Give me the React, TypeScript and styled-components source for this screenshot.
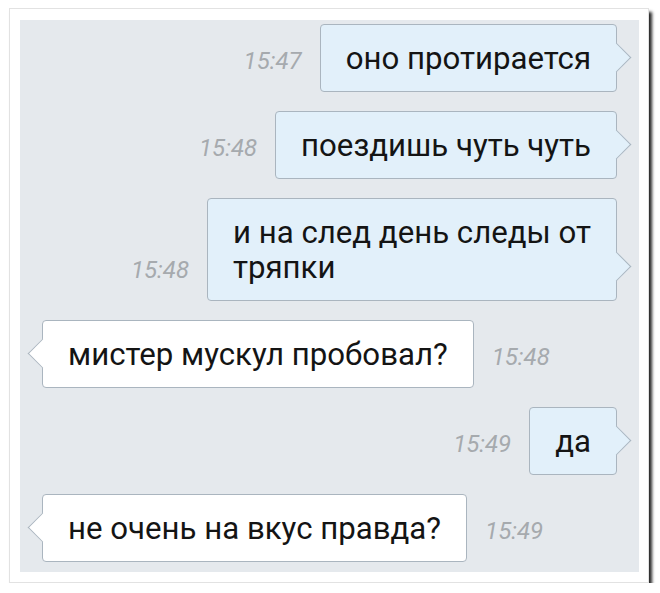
import { Fragment } from 'react';
import styled, { createGlobalStyle } from 'styled-components';

const GlobalStyle = createGlobalStyle`
    body {
        margin: 0;
        background: #ffffff;
        font-family: Roboto, 'Liberation Sans', sans-serif;
    }
`;

interface IMessage {
    lines: string[];
    time: string;
    out: boolean;
}

// lines are broken where the phone wrapped them
const MESSAGES: IMessage[] = [
    { lines: ['оно протирается'], time: '15:47', out: true },
    { lines: ['поездишь чуть чуть'], time: '15:48', out: true },
    { lines: ['и на след день следы от', 'тряпки'], time: '15:48', out: true },
    { lines: ['мистер мускул пробовал?'], time: '15:48', out: false },
    { lines: ['да'], time: '15:49', out: true },
    { lines: ['не очень на вкус правда?'], time: '15:49', out: false },
];

const Frame = styled.div`
    box-sizing: border-box;
    width: 640px;
    height: 575px;
    margin: 8px 0 0 9px;
    padding: 11px 9px 10px 10px;
    background: #ffffff;
    border: 1px solid #e2e2e2;
    box-shadow: 3px 4px 3px rgba(0, 0, 0, 0.85);
`;

const ChatArea = styled.div`
    box-sizing: border-box;
    height: 100%;
    padding: 4px 22px 0;
    background: #e5e9ed;
    display: flex;
    flex-direction: column;
    gap: 19px;
`;

const Row = styled.div<{ $out: boolean }>`
    display: flex;
    flex-direction: ${({ $out }) => ($out ? 'row' : 'row-reverse')};
    align-self: ${({ $out }) => ($out ? 'flex-end' : 'flex-start')};
    align-items: last baseline;
    gap: 18px;
`;

const Time = styled.span`
    font-size: 24px;
    font-style: italic;
    font-weight: 400;
    color: #a6aaae;
    white-space: nowrap;
`;

const Bubble = styled.div<{ $out: boolean }>`
    position: relative;
    padding: 16px 25px 15px 25px;
    font-size: 31.2px;
    line-height: 35px;
    white-space: nowrap;
    color: #141414;
    background: ${({ $out }) => ($out ? '#e2f0fa' : '#ffffff')};
    border: 1px solid #aab5bf;
    border-radius: 4px;

    &::after {
        content: '';
        position: absolute;
        bottom: 23px;
        width: 20px;
        height: 20px;
        background: inherit;
        transform: rotate(45deg);
        border: 1px solid #aab5bf;
        ${({ $out }) =>
            $out
                ? `right: -11px; border-left: none; border-bottom: none;`
                : `left: -11px; border-right: none; border-top: none;`}
    }
`;

export default function App() {
    return (
        <>
            <GlobalStyle />
            <Frame>
                <ChatArea>
                    {MESSAGES.map((msg, i) => (
                        <Row key={i} $out={msg.out}>
                            <Time>{msg.time}</Time>
                            <Bubble $out={msg.out}>
                                {msg.lines.map((line, j) => (
                                    <Fragment key={j}>
                                        {j > 0 && <br />}
                                        {line}
                                    </Fragment>
                                ))}
                            </Bubble>
                        </Row>
                    ))}
                </ChatArea>
            </Frame>
        </>
    );
}
